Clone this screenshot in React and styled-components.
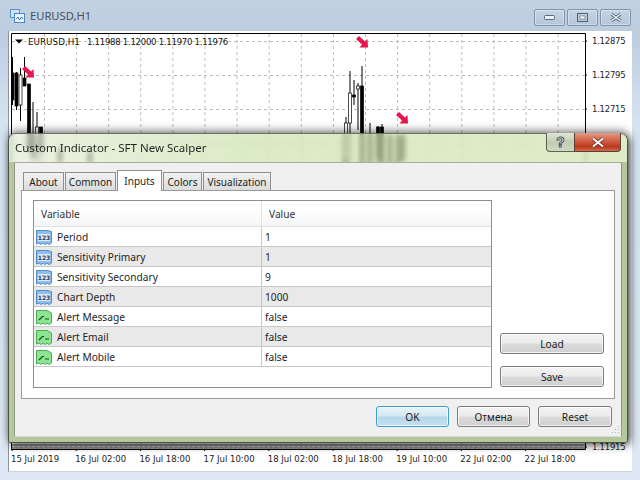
import React from 'react'
import styled, {createGlobalStyle} from 'styled-components'

const Global = createGlobalStyle`
  html, body {
    margin: 0;
    padding: 0;
    overflow: hidden;
  }
  body {
    font-family: "Noto Sans", "DejaVu Sans", sans-serif;
  }
`

const Desktop = styled.div`
  position: relative;
  width: 640px;
  height: 480px;
  display: flex;
  flex-direction: column;
  overflow: hidden;
  background: linear-gradient(#c3d2e2 0, #bccde0 31px, #d5e2f0 120px, #dde8f4 100%);
`

const TitleBar = styled.div`
  height: 31px;
  flex: none;
  display: flex;
  align-items: center;
  padding: 0 9px 0 10px;
  box-sizing: border-box;
`

const WindowTitle = styled.span`
  margin-left: 5px;
  font-size: 11.2px;
  color: #46525f;
`

const WinButtons = styled.div`
  margin-left: auto;
  margin-top: 4px;
  display: flex;
  gap: 2px;
`

const WinButton = styled.button`
  width: ${p => p.$w}px;
  height: 17px;
  padding: 0;
  display: flex;
  align-items: center;
  justify-content: center;
  border: 1px solid #7f93aa;
  border-radius: 2px;
  background: linear-gradient(#c6d4e3, #b5c6d9);
  box-shadow: inset 0 0 0 1px rgba(255, 255, 255, .35);
`

const ChartWindow = styled.div`
  flex: 1;
  margin: 0 8px 8px;
  padding: 2px 0 0 2px;
  display: flex;
  flex-direction: column;
  background: #fff;
  border-left: 1px solid #8b949e;
  border-bottom: 1px solid #d0d4d8;
  box-sizing: border-box;
`

const ChartRow = styled.div`
  display: flex;
  height: 418px;
`

const PriceAxis = styled.div`
  flex: 1;
  padding: 1px 0 0 5px;
  display: flex;
  flex-direction: column;
  gap: 20px;
`

const AxisLabel = styled.span`
  display: block;
  font-family: "DejaVu Sans", sans-serif;
  font-size: 8.5px;
  letter-spacing: ${p => (p.$tight ? '-.25px' : '0')};
  line-height: 14px;
  color: #1c1c1c;
  white-space: nowrap;
  ${p => p.$end && 'margin-top: auto; margin-bottom: -3px;'}
`

const TimeAxis = styled.div`
  display: flex;
  margin-top: 1px;
`

const TimeCell = styled.div`
  width: 64.2px;
  flex: none;
`

const Dialog = styled.div`
  position: absolute;
  left: 8px;
  top: 133px;
  width: 620px;
  height: 310px;
  box-sizing: border-box;
  padding: 28px 5px 5px;
  border-radius: 7px 7px 3px 3px;
  border: 1px solid #4a5240;
  border-top-color: #6b6f66;
  background: linear-gradient(90deg, rgba(228, 236, 216, .7), rgba(200, 224, 166, .64) 40%, rgba(208, 229, 178, .72));
  backdrop-filter: blur(2.5px);
  box-shadow: 2px 2px 8px rgba(0, 0, 0, .7), 0 -4px 8px rgba(0, 0, 0, .25);
`

const DialogEdge = styled.div`
  position: absolute;
  inset: 28px 0 0 0;
  border: solid #b4c89c;
  border-width: 0 5px 5px;
  border-radius: 0 0 2px 2px;
  pointer-events: none;
`

const DialogTitle = styled.div`
  position: absolute;
  left: 6px;
  top: 5px;
  font-size: 11.5px;
  line-height: 17px;
  color: #1e2420;
`

const CaptionButtons = styled.div`
  position: absolute;
  right: 6px;
  top: -1px;
  display: flex;
`

const HelpButton = styled.div`
  width: 28px;
  height: 19px;
  display: flex;
  align-items: center;
  justify-content: center;
  box-sizing: border-box;
  border: 1px solid #5b6353;
  border-top: 0;
  border-right: 0;
  border-radius: 0 0 0 4px;
  background: linear-gradient(#dfe5d6, #c2ccb2 50%, #cfd8c2);
  font: bold 14px "Liberation Sans", sans-serif;
  color: #f4f6f8;
  -webkit-text-stroke: 1px #4c5560;
`

const CloseButton = styled.div`
  width: 47px;
  height: 19px;
  display: flex;
  align-items: center;
  justify-content: center;
  box-sizing: border-box;
  border: 1px solid #5b4038;
  border-top: 0;
  border-radius: 0 0 4px 0;
  background: linear-gradient(#e19a86, #d0573d 50%, #b93a1e 75%, #cf6a4c);
`

const Panel = styled.div`
  height: 100%;
  box-sizing: border-box;
  padding: 8px 6px 0 6px;
  background: #f0f0f0;
  border: 1px solid #8f9588;
  border-bottom-color: #d8ddd2;
  border-top-color: #a8ad9f;
  display: flex;
  flex-direction: column;
  position: relative;
  z-index: 1;
`

const Tabs = styled.div`
  height: 19px;
  flex: none;
  display: flex;
  align-items: flex-end;
  padding-left: 1px;
`

const Tab = styled.div`
  width: ${p => p.$w}px;
  height: ${p => (p.$active ? 21 : 18)}px;
  margin-left: 1px;
  box-sizing: border-box;
  display: flex;
  align-items: center;
  justify-content: center;
  font-size: 10px;
  color: #222;
  border: 1px solid #8e8f8f;
  border-bottom: 0;
  background: ${p => (p.$active ? '#fff' : 'linear-gradient(#f2f2f2, #dcdcdc)')};
  position: relative;
  z-index: ${p => (p.$active ? 2 : 0)};
  margin-bottom: ${p => (p.$active ? -1 : 0)}px;
`

const TabBody = styled.div`
  height: 209px;
  flex: none;
  box-sizing: border-box;
  padding: 9px 10px 10px 11px;
  background: #fff;
  border: 1px solid #9a9a9a;
  display: flex;
  gap: 8px;
`

const Table = styled.div`
  width: 459px;
  box-sizing: border-box;
  border: 1px solid #8e8e8e;
  background: #fff;
`

const HeaderRow = styled.div`
  height: 25px;
  display: grid;
  grid-template-columns: 227px 1fr;
  align-items: center;
  font-size: 10.2px;
  color: #333;
  background: linear-gradient(#fff 40%, #f4f5f7);
  border-bottom: 1px solid #dfe2e6;
`

const HeaderCell = styled.div`
  height: 100%;
  display: flex;
  align-items: center;
  padding-left: 7px;
  & + & {
    border-left: 1px solid #dfe2e6;
  }
`

const Row = styled.div`
  height: 20px;
  box-sizing: border-box;
  display: grid;
  grid-template-columns: 227px 1fr;
  font-size: 10.2px;
  color: #1e1e1e;
  background: ${p => (p.$odd ? '#e9e9e9' : '#fff')};
  border-bottom: 1px solid #c8c8c8;
`

const VarCell = styled.div`
  display: flex;
  align-items: center;
  gap: 5px;
  padding-left: 2px;
`

const ValueCell = styled.div`
  display: flex;
  align-items: center;
  padding-left: 3px;
  border-left: 1px solid #c8c8c8;
`

const SideButtons = styled.div`
  display: flex;
  flex-direction: column;
  justify-content: flex-end;
  gap: 12px;
  padding-bottom: 1px;
`

const Button = styled.button`
  width: ${p => p.$w || 73}px;
  height: 21px;
  padding: 0;
  box-sizing: border-box;
  font-family: inherit;
  font-size: 10.2px;
  color: #222;
  border-radius: 3px;
  border: 1px solid ${p => (p.$primary ? '#3c9ed0' : '#7b7b7b')};
  background: ${p => p.$primary
    ? 'linear-gradient(#e9f3f9, #d3e7f3 48%, #b5d6ea 52%, #c3e0f0)'
    : 'linear-gradient(#f3f3f3, #ebebeb 48%, #dbdbdb 52%, #cfcfcf)'};
  box-shadow: inset 0 0 0 1px rgba(255, 255, 255, .7);
`

const Footer = styled.div`
  flex: 1;
  display: flex;
  justify-content: flex-end;
  align-items: flex-start;
  gap: 8px;
  padding: 7px 3px 0 0;
`

const Grip = styled.svg`
  position: absolute;
  right: 1px;
  bottom: 1px;
`

const times = ['15 Jul 2019', '16 Jul 02:00', '16 Jul 18:00', '17 Jul 10:00', '18 Jul 02:00', '18 Jul 18:00', '19 Jul 10:00', '22 Jul 02:00', '22 Jul 18:00']

const params = [
  {name: 'Period', value: '1', type: 'num'},
  {name: 'Sensitivity Primary', value: '1', type: 'num'},
  {name: 'Sensitivity Secondary', value: '9', type: 'num'},
  {name: 'Chart Depth', value: '1000', type: 'num'},
  {name: 'Alert Message', value: 'false', type: 'bool'},
  {name: 'Alert Email', value: 'false', type: 'bool'},
  {name: 'Alert Mobile', value: 'false', type: 'bool'},
]

const tabs = [
  {label: 'About', w: 41},
  {label: 'Common', w: 51},
  {label: 'Inputs', w: 45, active: true},
  {label: 'Colors', w: 39},
  {label: 'Visualization', w: 68},
]

// x, wick top, wick bottom, body top, body bottom, filled
const candles = [
  [12.5, 57, 105, 73, 100, 1],
  [16.5, 72, 110, 73, 106, 1],
  [20.5, 68, 121, 75, 105, 0],
  [24.5, 57, 86, 78, 86, 1],
  [29, 84, 150, 84, 150, 1],
  [33, 102, 160, 135, 158, 1],
  [37, 112, 165, 127, 150, 0],
  [41, 127, 160, 127, 150, 1],
  [60, 145, 165, 150, 162, 1],
  [90, 150, 165, 152, 162, 1],
  [345, 135, 165, 135, 165, 1],
  [346, 117, 165, 123, 160, 0],
  [350, 71, 165, 93, 123, 0],
  [354, 80, 105, 95, 97, 1],
  [358, 83, 130, 86, 89, 0],
  [362, 66, 165, 86, 165, 1],
  [370, 123, 165, 135, 165, 1],
  [378, 126, 165, 127, 160, 1],
  [382, 124, 165, 127, 165, 1],
  [390, 135, 165, 136, 165, 1],
  [398, 135, 165, 136, 165, 1],
  [403, 135, 162, 136, 160, 1],
]

const arrows = [[22, 66], [356, 36], [396, 112]]

function Chart() {
  const vert = Array.from({length: 17}, (_, i) => 44.5 + i * 32.1)
  return (
    <svg width="576" height="418" viewBox="11 33 576 418" style={{flex: 'none', display: 'block'}}>
      <g stroke="#bdbdbd" strokeDasharray="3 3">
        {vert.map(x => <line key={x} x1={x} y1="34" x2={x} y2="449"/>)}
        {[41.5, 75.5, 109.5, 143.5].map(y => <line key={y} x1="12" y1={y} x2="585" y2={y}/>)}
      </g>
      <rect x="12" y="444" width="573" height="5" fill="#8f8f8f"/>
      <line x1="12" y1="446.5" x2="585" y2="446.5" stroke="#c4c4c4" strokeDasharray="3 2"/>
      {candles.map(([x, wt, wb, bt, bb, fill]) => (
        <g key={x}>
          <line x1={x} y1={wt} x2={x} y2={wb} stroke="#000" strokeWidth="1"/>
          <rect x={x - 1.5} y={bt} width="3" height={bb - bt} fill={fill ? '#000' : '#fff'} stroke="#000" strokeWidth=".7"/>
        </g>
      ))}
      {arrows.map(([x, y]) => (
        <path key={x} transform={`translate(${x} ${y})`} d="M0 3 L3 0 L9 5.5 L11.5 3 L12 11.5 L3.5 11.5 L6 8.5 Z" fill="#e8164f"/>
      ))}
      <path d="M15 39.5h8l-4 4z" fill="#000"/>
      <text x="28" y="45" fontFamily="DejaVu Sans, sans-serif" fontSize="8.8" fill="#111">EURUSD,H1</text>
      <text x="87" y="45" fontFamily="DejaVu Sans, sans-serif" fontSize="8.5" letterSpacing="-.25" fill="#111">1.11988 1.12000 1.11970 1.11976</text>
      <path d="M11.5 33.5H585.5V449.5H11.5Z" fill="none" stroke="#000"/>
      {[41, 75, 109, 447].map(y => <line key={y} x1="586" y1={y} x2="589" y2={y} stroke="#000"/>)}
      {times.map((t, i) => <line key={t} x1={12 + i * 64.2} y1="450" x2={12 + i * 64.2} y2="451" stroke="#000"/>)}
    </svg>
  )
}

function NumIcon() {
  return (
    <svg width="16" height="16" viewBox="0 0 16 16" style={{flex: 'none'}}>
      <path d="M.5 1.5H11L15.5 2.5V14L13 15.5 11 14 9 15.5 7 14 5 15.5 3 14 .5 15Z" fill="#8fbdec" stroke="#4f8cc9"/>
      <rect x="2" y="5" width="12" height="7" fill="#dcebf9"/>
      <text x="8" y="11.2" textAnchor="middle" fontFamily="DejaVu Sans, sans-serif" fontSize="6" fontWeight="700" fill="#1d3d5f">123</text>
    </svg>
  )
}

function BoolIcon() {
  return (
    <svg width="16" height="16" viewBox="0 0 16 16" style={{flex: 'none'}}>
      <path d="M.5 1.5H11L15.5 4V14L13 15.5 11 14 9 15.5 7 14 5 15.5 3 14 .5 15Z" fill="#8de493" stroke="#45b052"/>
      <path d="M3 11L6.5 7.5H8M9 10H13" fill="none" stroke="#14491e" strokeWidth="1.2"/>
    </svg>
  )
}

function App() {
  return (
    <Desktop>
      <Global/>
      <TitleBar>
        <svg width="15" height="14" viewBox="0 0 15 14">
          <rect x=".5" y=".5" width="9" height="8" fill="#cfe3f7" stroke="#5b93cf"/>
          <rect x="4.5" y="4.5" width="10" height="9" fill="#eaf3fc" stroke="#4b86c6"/>
          <path d="M6 10l2-2 1.5 3 2-3 1.5 2" fill="none" stroke="#3f79b8"/>
        </svg>
        <WindowTitle>EURUSD,H1</WindowTitle>
        <WinButtons>
          <WinButton $w={31}>
            <svg width="11" height="6"><rect x=".5" y=".5" width="10" height="4" rx="1" fill="#eef2f6" stroke="#56687c"/></svg>
          </WinButton>
          <WinButton $w={31}>
            <svg width="11" height="9"><rect x=".5" y=".5" width="10" height="8" fill="none" stroke="#4d5f73"/><rect x="3" y="3" width="5" height="3" fill="#fff" stroke="#4d5f73" strokeWidth=".6"/></svg>
          </WinButton>
          <WinButton $w={31}>
            <svg width="12" height="9" viewBox="0 0 12 9"><path d="M1.5 1L10.5 8M10.5 1L1.5 8" stroke="#4d5f73" strokeWidth="3"/><path d="M1.5 1L10.5 8M10.5 1L1.5 8" stroke="#f2f5f8" strokeWidth="1.4"/></svg>
          </WinButton>
        </WinButtons>
      </TitleBar>

      <ChartWindow>
        <ChartRow>
          <Chart/>
          <PriceAxis>
            <AxisLabel $tight>1.12875</AxisLabel>
            <AxisLabel $tight>1.12795</AxisLabel>
            <AxisLabel $tight>1.12715</AxisLabel>
            <AxisLabel $tight $end>1.11915</AxisLabel>
          </PriceAxis>
        </ChartRow>
        <TimeAxis>
          {times.map(t => (
            <TimeCell key={t}><AxisLabel>{t}</AxisLabel></TimeCell>
          ))}
        </TimeAxis>
      </ChartWindow>

      <Dialog>
        <DialogEdge/>
        <DialogTitle>Custom Indicator - SFT New Scalper</DialogTitle>
        <CaptionButtons>
          <HelpButton>?</HelpButton>
          <CloseButton>
            <svg width="14" height="11" viewBox="0 0 14 11"><path d="M2 1.5L12 9.5M12 1.5L2 9.5" stroke="#5d2a1c" strokeWidth="3.4"/><path d="M2 1.5L12 9.5M12 1.5L2 9.5" stroke="#fff" strokeWidth="2"/></svg>
          </CloseButton>
        </CaptionButtons>
        <Panel>
          <Tabs>
            {tabs.map(t => <Tab key={t.label} $w={t.w} $active={t.active}>{t.label}</Tab>)}
          </Tabs>
          <TabBody>
            <Table>
              <HeaderRow>
                <HeaderCell>Variable</HeaderCell>
                <HeaderCell>Value</HeaderCell>
              </HeaderRow>
              {params.map((p, i) => (
                <Row key={p.name} $odd={i % 2 === 1}>
                  <VarCell>
                    {p.type === 'num' ? <NumIcon/> : <BoolIcon/>}
                    {p.name}
                  </VarCell>
                  <ValueCell>{p.value}</ValueCell>
                </Row>
              ))}
            </Table>
            <SideButtons>
              <Button $w={104}>Load</Button>
              <Button $w={104}>Save</Button>
            </SideButtons>
          </TabBody>
          <Footer>
            <Button $primary>OK</Button>
            <Button>Отмена</Button>
            <Button $w={74}>Reset</Button>
          </Footer>
          <Grip width="10" height="10" viewBox="0 0 10 10">
            <path d="M8 1h1v1H8zM5 4h1v1H5zM8 4h1v1H8zM2 7h1v1H2zM5 7h1v1H5zM8 7h1v1H8z" fill="#b4b4b4"/>
          </Grip>
        </Panel>
      </Dialog>
    </Desktop>
  )
}

export default App
